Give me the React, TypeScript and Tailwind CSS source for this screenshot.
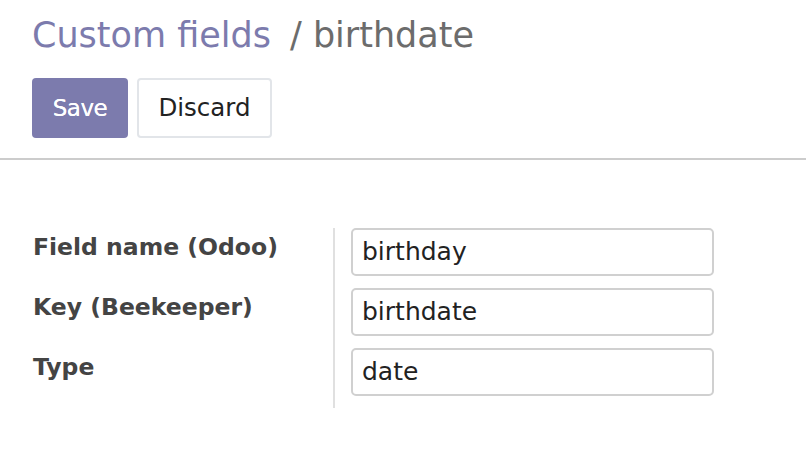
export default function App() {
  const rows = [
    { label: "Field name (Odoo)", value: "birthday" },
    { label: "Key (Beekeeper)", value: "birthdate" },
    { label: "Type", value: "date" },
  ];
  return (
    <div className="w-[806px] h-[474px] bg-white overflow-hidden" style={{ fontFamily: '"DejaVu Sans", "Lucida Grande", sans-serif' }}>
      <div className="px-[32px] pt-[12px]">
        <div className="flex items-baseline text-[35px] leading-[46px]">
          <span className="text-[#7c7bad]">Custom fields</span>
          <span className="text-[#6c6c6c] ml-[19px]">/ birthdate</span>
        </div>
        <div className="flex gap-[9px] mt-[20px]">
          <button className="w-[96px] h-[60px] rounded-[4px] bg-[#7c7bad] text-white text-[23px] tracking-[-0.5px] [text-shadow:0_0_0.6px_#fff]">Save</button>
          <button className="w-[135px] h-[60px] rounded-[4px] bg-white border-2 border-[#e2e5e9] text-[#222] text-[24.5px]">Discard</button>
        </div>
      </div>
      <div className="mt-[20px] h-[2px] bg-[#cccccc]" />
      <div className="flex pl-[33px] pt-[68px]">
        <div className="w-[300px] flex flex-col">
          {rows.map((r) => (
            <div key={r.label} className="h-[60px] pt-[2px] text-[23.5px] font-bold text-[#444]">{r.label}</div>
          ))}
        </div>
        <div className="w-[2px] bg-[#e0e0e0] h-[180px]" />
        <div className="flex flex-col gap-[12px] pl-[16px]">
          {rows.map((r) => (
            <div key={r.value} className="w-[363px] h-[48px] border-2 border-[#d0d0d0] rounded-[5px] flex items-center pl-[9px] text-[25px] text-[#222]">{r.value}</div>
          ))}
        </div>
      </div>
    </div>
  );
}
